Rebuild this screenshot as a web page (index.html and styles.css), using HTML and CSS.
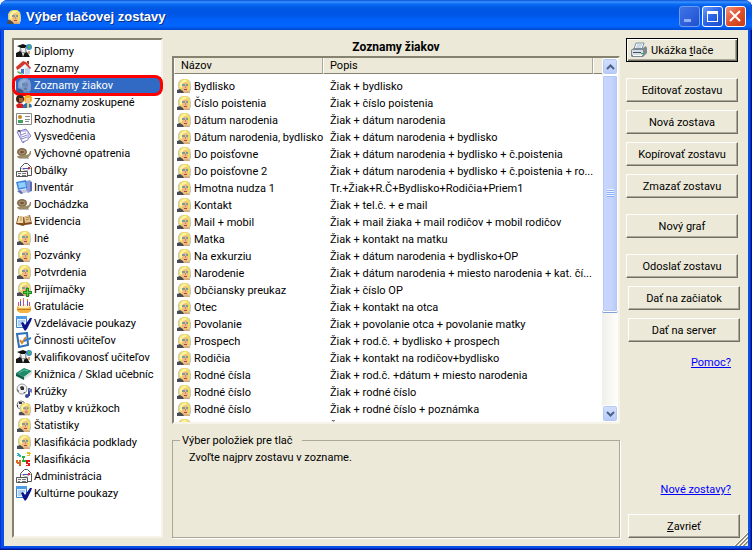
FILE: index.html
```html
<!DOCTYPE html>
<html lang="sk">

<head>
    <meta charset="UTF-8">
    <meta name="viewport" content="width=device-width, initial-scale=1.0">
    <title>Výber tlačovej zostavy</title>
    <link rel="stylesheet" href="styles.css">
</head>

<body>
    <!-- Icon set -->
    <svg class="sprite" aria-hidden="true">
        <symbol id="face" viewBox="0 0 16 16">
            <path d="M2 5l2-3 3-1h4l3 2 1 4v5l-2 3H6L2 10z" fill="#c4c6c8" />
            <path d="M3 5l2-3 3-1h3l2 2 1 3v5l-2 3H7L3 10z" fill="#f2dc5c" />
            <path d="M4 5l3-3 3 0 1 1-4 3-1 4-2-1z" fill="#fff3a0" />
            <path d="M7 5l3-1 2 2v5l-2 3H8l-2-3z" fill="#efb988" />
            <path d="M6 6h3v2H6zM10 6h2v2h-2z" fill="#7f9c94" />
            <path d="M9 8h1v2H9z" fill="#c98f64" />
            <path d="M8 11h3v1H8z" fill="#b4473c" />
            <path d="M1 12l3-1 3 2 1 2H1z" fill="#4b4b55" />
            <path d="M8 14l3-1 3 1v1H8z" fill="#d9a878" />
        </symbol>
        <symbol id="graduate" viewBox="0 0 16 16">
            <path d="M1 3l6-2 5 2-5 3z" fill="#111" />
            <path d="M4 5h6l1 5H3z" fill="#999" />
            <path d="M5 5h4v4H6z" fill="#eee" />
            <path d="M0 10l4-2 3 3 4-2 3 5H0z" fill="#151515" />
            <path d="M6 10l2 1-1 3z" fill="#fff" />
            <circle cx="13" cy="4" r="3" fill="#3a8fd0" />
            <path d="M12 2l3 1-1 3-2-1z" fill="#4fb060" />
            <path d="M12 8h2v3h-2z" fill="#c9a070" />
        </symbol>
        <symbol id="house" viewBox="0 0 16 16">
            <path d="M3 7l6-4 5 4v7l-5 1-6-3z" fill="#eef2fa" />
            <path d="M9 8l5-1v7l-5 1z" fill="#c4d4ee" />
            <path d="M0 7l7-6 3 1 5 6-1 1-5-5-6 5-2 1z" fill="#d3382a" />
            <path d="M11 1h2v4l-2-2z" fill="#a02c22" />
            <path d="M5 9h3v5l-3-1z" fill="#3f78c4" />
            <path d="M1 11l3 1 3 3-5-2z" fill="#58a848" />
        </symbol>
        <symbol id="people" viewBox="0 0 16 16">
            <circle cx="4" cy="5" r="4" fill="#3a2418" />
            <circle cx="12" cy="5" r="4" fill="#f2b020" />
            <path d="M3 4h4v4H3z" fill="#a85c30" />
            <path d="M10 4h4v5h-4z" fill="#f3c48a" />
            <path d="M0 11l3-2 4 1v4H1z" fill="#d6201c" />
            <path d="M7 11l3-2 5 1 1 3-4 1H7z" fill="#2872c0" />
            <path d="M11 9h2v5h-2z" fill="#f7d060" />
        </symbol>
        <symbol id="card" viewBox="0 0 16 16">
            <path d="M0.500 2.500h15v11h-15z" fill="#fff" stroke="#888" />
            <circle cx="4" cy="6" r="2" fill="#c8842e" />
            <path d="M2 9h5v3H2z" fill="#3fa060" />
            <path d="M9 5h5v1H9zM9 8h5v1H9zM9 10h4v1H9z" fill="#888" />
        </symbol>
        <symbol id="sheets" viewBox="0 0 16 16">
            <path d="M1 4l9-3 5 7-8 7z" fill="#e7e5fb" stroke="#7d78c0" />
            <path d="M4 3l8 0 0 9-6 2z" fill="#fff" stroke="#9c98d8" />
            <path d="M5 7l5-2M6 9l5-2M6 11l5-2" stroke="#8a86cc" />
            <path d="M1 2l3 0 1 3z" fill="#555" />
        </symbol>
        <symbol id="snail" viewBox="0 0 16 16">
            <ellipse cx="6" cy="7" rx="5" ry="4" fill="#7c6a4c" />
            <ellipse cx="6" cy="7" rx="3" ry="2" fill="none" stroke="#b89c74" />
            <path d="M5 6h2v2H5z" fill="#8a4a3a" />
            <path d="M1 11l9-1 3-1 1-3h1v3l-3 4H2z" fill="#9c8c64" />
            <path d="M3 13h10v1H3z" fill="#bbb" />
        </symbol>
        <symbol id="envelope" viewBox="0 0 16 16">
            <path d="M4.500 13.500v-8l4-4h3l4 4v8z" fill="#fff" stroke="#555" />
            <path d="M5 6l5 3 5-3" fill="none" stroke="#aaa" />
            <path d="M7 6h5v1H7z" fill="#5050c0" />
            <path d="M12 5h2v2h-2z" fill="#d03030" />
            <path d="M0.500 9.500h11v5H0.500z" fill="#f4f4f4" stroke="#555" />
            <path d="M2 11h3v1H2zM6 11h4v1H6zM2 13h2v1H2zM6 13h4v1H6z" fill="#777" />
        </symbol>
        <symbol id="computer" viewBox="0 0 16 16">
            <path d="M10 2l4-1 2 2v9l-4 2-2-2z" fill="#8a9cd8" />
            <path d="M14 3h2v9h-2z" fill="#5c6cb0" />
            <path d="M0 3l10-2 1 8-9 2z" fill="#3f86e0" />
            <path d="M2 4l7-1 1 5-7 1z" fill="#8fd0fa" />
            <path d="M3 11l6-1 3 3-7 2z" fill="#c4c8e4" />
            <path d="M1 12l3-1 3 3-2 1z" fill="#5a6ea8" />
        </symbol>
        <symbol id="book" viewBox="0 0 16 16">
            <path d="M0 11l2-8 6 1 6-2 2 9-7 1-2 1z" fill="#7d4a22" />
            <path d="M1 10l2-7 4 1 1 6-3 0z" fill="#f1d9a8" />
            <path d="M8 4l5-2 2 7-6 1z" fill="#e4c48c" />
            <path d="M7 4h1v7H7z" fill="#93602c" />
            <path d="M4 5l2 0M4 7l2 0M10 5l3-1M10 7l3-1" stroke="#b88c50" />
        </symbol>
        <symbol id="faceplus" viewBox="0 0 16 16">
            <use href="#face" />
            <path d="M10 7h3v3h3v3h-3v3h-3v-3H7v-3h3z" fill="#1e8a22" />
            <path d="M11 8h1v7h-1zM8 11h7v1H8z" fill="#58cc50" />
        </symbol>
        <symbol id="cake" viewBox="0 0 16 16">
            <path d="M1 8l3-2h8l3 2v5l-3 2H4l-3-2z" fill="#f0b840" />
            <path d="M1 8l3-2h8l3 2-3 2H4z" fill="#fff2c0" />
            <path d="M1 11h14v1H1z" fill="#c87828" />
            <path d="M4 3h1v5H4zM11 3h1v5h-1z" fill="#3868d0" />
            <path d="M7 2h1v6H7zM2 4h1v4H2zM13 4h1v4h-1z" fill="#d048a8" />
            <path d="M4 1h1v2H4zM7 0h1v2H7zM11 1h1v2h-1z" fill="#f08020" />
        </symbol>
        <symbol id="formcheck" viewBox="0 0 16 16">
            <path d="M0.500 1.500h10v11h-10z" fill="#e8f2ff" stroke="#3d86cc" />
            <path d="M0 1h11v3H0z" fill="#4d9ce4" />
            <path d="M2 6h7M2 8h5M2 10h3" stroke="#7aaee0" />
            <path d="M5 8l2-1 2 3 5-7h2l-1 3-4 8-2 2-2-3z" fill="#0b1488" />
        </symbol>
        <symbol id="clipcheck" viewBox="0 0 16 16">
            <path d="M1 2l10-1 1 12-9 2z" fill="#fff" stroke="#2f6fb4" stroke-width="2" />
            <path d="M4 8l2 3 4-6" fill="none" stroke="#d8862c" stroke-width="2" />
            <path d="M8 9l7-3" stroke="#3b7fc8" stroke-width="2" />
        </symbol>
        <symbol id="greenbook" viewBox="0 0 16 16">
            <path d="M0 7l8-5 8 3-8 6z" fill="#1d8a68" />
            <path d="M0 7v3l8 4v-3z" fill="#0e6048" />
            <path d="M8 11l8-6v3l-8 6z" fill="#e0e0dc" />
            <path d="M3 7l5-3 4 1" fill="none" stroke="#60c0a0" />
        </symbol>
        <symbol id="ball" viewBox="0 0 16 16">
            <circle cx="6" cy="6" r="5" fill="#f2f2f4" stroke="#999" />
            <path d="M4 4l2-1 2 1 0 3-3 0zM1 6l2 2-1 1zM7 10l2-1 0 1z" fill="#333" />
            <path d="M13 5v8" stroke="#36469c" stroke-width="2" />
            <path d="M12 5l4 1v4l-3-2z" fill="#6c7cc4" />
            <circle cx="11" cy="13" r="2" fill="#36469c" />
        </symbol>
        <symbol id="ballface" viewBox="0 0 16 16">
            <circle cx="5" cy="5" r="4" fill="#eee" stroke="#888" />
            <path d="M3 2h3v2H3zM1 5h1v2H1z" fill="#333" />
            <use href="#face" x="2" y="2" width="14" height="14" />
        </symbol>
        <symbol id="numbers" viewBox="0 0 16 16">
            <path d="M1 2h2v1h1v1h1v2H3V5H1V4h1V3H1z" fill="#20b0c0" />
            <path d="M11 1h3v1h1v1h-1v2h-3V4h2V3h-2z" fill="#e0c020" />
            <path d="M6 5h3v2H8v2h2v2H6V9h1V7H6z" fill="#28b030" />
            <path d="M0 9h2v2h1V9h2v6H3v-2H1v-1H0z" fill="#d86820" />
            <path d="M10 9h4v2h-2v1h2v3h-4v-1h2v-1h-2z" fill="#e01818" />
        </symbol>
        <symbol id="printer" viewBox="0 0 16 16">
            <path d="M5 1h8l-2 6H3z" fill="#fff" stroke="#7890a8" />
            <path d="M6 3h5M5 5h5" stroke="#9ab4cc" />
            <path d="M0 8l3-2h9l3-2 1 2v5l-4 4H1l-1-1z" fill="#7c8894" />
            <path d="M1 8h11v5H1z" fill="#d5dde4" />
            <path d="M2 10h8v1H2z" fill="#45525e" />
            <path d="M2 13h9v1H2z" fill="#fff" />
            <path d="M10 11h2v1h-2z" fill="#20b030" />
        </symbol>
    </svg>

    <div class="window">
        <header class="titlebar">
            <svg class="icon"><use href="#face" /></svg>
            <h1>Výber tlačovej zostavy</h1>
            <div class="caption-buttons">
                <button class="caption-btn disabled" aria-label="Minimalizovať" disabled>
                    <svg viewBox="0 0 21 21"><path d="M5 13h7v3H5z" fill="#8fb0f4" /></svg>
                </button>
                <button class="caption-btn" aria-label="Maximalizovať">
                    <svg viewBox="0 0 21 21"><path d="M5 5h11v11H5zM6 8v7h9V8z" fill="#fff" fill-rule="evenodd" /></svg>
                </button>
                <button class="caption-btn close" aria-label="Zavrieť okno">
                    <svg viewBox="0 0 21 21"><path d="M5 5l10 10M15 5L5 15" stroke="#fff" stroke-width="2" /></svg>
                </button>
            </div>
        </header>

        <main class="content">
            <!-- Categories -->
            <ul class="categories">
                <li><button class="category"><svg class="icon"><use href="#graduate" /></svg>Diplomy</button></li>
                <li><button class="category"><svg class="icon"><use href="#house" /></svg>Zoznamy</button></li>
                <li><button class="category selected"><svg class="icon"><use href="#face" /></svg><span>Zoznamy žiakov</span></button></li>
                <li><button class="category"><svg class="icon"><use href="#people" /></svg>Zoznamy zoskupené</button></li>
                <li><button class="category"><svg class="icon"><use href="#card" /></svg>Rozhodnutia</button></li>
                <li><button class="category"><svg class="icon"><use href="#sheets" /></svg>Vysvedčenia</button></li>
                <li><button class="category"><svg class="icon"><use href="#snail" /></svg>Výchovné opatrenia</button></li>
                <li><button class="category"><svg class="icon"><use href="#envelope" /></svg>Obálky</button></li>
                <li><button class="category"><svg class="icon"><use href="#computer" /></svg>Inventár</button></li>
                <li><button class="category"><svg class="icon"><use href="#snail" /></svg>Dochádzka</button></li>
                <li><button class="category"><svg class="icon"><use href="#book" /></svg>Evidencia</button></li>
                <li><button class="category"><svg class="icon"><use href="#face" /></svg>Iné</button></li>
                <li><button class="category"><svg class="icon"><use href="#face" /></svg>Pozvánky</button></li>
                <li><button class="category"><svg class="icon"><use href="#face" /></svg>Potvrdenia</button></li>
                <li><button class="category"><svg class="icon"><use href="#faceplus" /></svg>Prijímačky</button></li>
                <li><button class="category"><svg class="icon"><use href="#cake" /></svg>Gratulácie</button></li>
                <li><button class="category"><svg class="icon"><use href="#formcheck" /></svg>Vzdelávacie poukazy</button></li>
                <li><button class="category"><svg class="icon"><use href="#clipcheck" /></svg>Činnosti učiteľov</button></li>
                <li><button class="category"><svg class="icon"><use href="#graduate" /></svg>Kvalifikovanosť učiteľov</button></li>
                <li><button class="category"><svg class="icon"><use href="#greenbook" /></svg>Knižnica / Sklad učebníc</button></li>
                <li><button class="category"><svg class="icon"><use href="#ball" /></svg>Krúžky</button></li>
                <li><button class="category"><svg class="icon"><use href="#ballface" /></svg>Platby v krúžkoch</button></li>
                <li><button class="category"><svg class="icon"><use href="#face" /></svg>Štatistiky</button></li>
                <li><button class="category"><svg class="icon"><use href="#face" /></svg>Klasifikácia podklady</button></li>
                <li><button class="category"><svg class="icon"><use href="#numbers" /></svg>Klasifikácia</button></li>
                <li><button class="category"><svg class="icon"><use href="#envelope" /></svg>Administrácia</button></li>
                <li><button class="category"><svg class="icon"><use href="#formcheck" /></svg>Kultúrne poukazy</button></li>
            </ul>

            <!-- Reports of the selected category -->
            <section class="reports">
                <h2>Zoznamy žiakov</h2>
                <div class="report-list">
                    <div class="report-rows">
                        <table>
                            <thead>
                                <tr><th class="col-name">Názov</th><th>Popis</th><th class="col-rest"></th></tr>
                            </thead>
                            <tbody>
                                <tr><td><svg class="icon"><use href="#face" /></svg>Bydlisko</td><td>Žiak + bydlisko</td></tr>
                                <tr><td><svg class="icon"><use href="#face" /></svg>Číslo poistenia</td><td>Žiak + číslo poistenia</td></tr>
                                <tr><td><svg class="icon"><use href="#face" /></svg>Dátum narodenia</td><td>Žiak + dátum narodenia</td></tr>
                                <tr><td><svg class="icon"><use href="#face" /></svg>Dátum narodenia, bydlisko</td><td>Žiak + dátum narodenia + bydlisko</td></tr>
                                <tr><td><svg class="icon"><use href="#face" /></svg>Do poisťovne</td><td>Žiak + dátum narodenia + bydlisko + č.poistenia</td></tr>
                                <tr><td><svg class="icon"><use href="#face" /></svg>Do poisťovne 2</td><td>Žiak + dátum narodenia + bydlisko + č.poistenia + ro...</td></tr>
                                <tr><td><svg class="icon"><use href="#face" /></svg>Hmotna nudza 1</td><td>Tr.+Žiak+R.Č+Bydlisko+Rodičia+Priem1</td></tr>
                                <tr><td><svg class="icon"><use href="#face" /></svg>Kontakt</td><td>Žiak + tel.č. + e mail</td></tr>
                                <tr><td><svg class="icon"><use href="#face" /></svg>Mail + mobil</td><td>Žiak + mail žiaka + mail rodičov + mobil rodičov</td></tr>
                                <tr><td><svg class="icon"><use href="#face" /></svg>Matka</td><td>Žiak + kontakt na matku</td></tr>
                                <tr><td><svg class="icon"><use href="#face" /></svg>Na exkurziu</td><td>Žiak + dátum narodenia + bydlisko+OP</td></tr>
                                <tr><td><svg class="icon"><use href="#face" /></svg>Narodenie</td><td>Žiak + dátum narodenia + miesto narodenia + kat. čí...</td></tr>
                                <tr><td><svg class="icon"><use href="#face" /></svg>Občiansky preukaz</td><td>Žiak + číslo OP</td></tr>
                                <tr><td><svg class="icon"><use href="#face" /></svg>Otec</td><td>Žiak + kontakt na otca</td></tr>
                                <tr><td><svg class="icon"><use href="#face" /></svg>Povolanie</td><td>Žiak + povolanie otca + povolanie matky</td></tr>
                                <tr><td><svg class="icon"><use href="#face" /></svg>Prospech</td><td>Žiak + rod.č. + bydlisko + prospech</td></tr>
                                <tr><td><svg class="icon"><use href="#face" /></svg>Rodičia</td><td>Žiak + kontakt na rodičov+bydlisko</td></tr>
                                <tr><td><svg class="icon"><use href="#face" /></svg>Rodné čísla</td><td>Žiak + rod.č. +dátum + miesto narodenia</td></tr>
                                <tr><td><svg class="icon"><use href="#face" /></svg>Rodné číslo</td><td>Žiak + rodné číslo</td></tr>
                                <tr><td><svg class="icon"><use href="#face" /></svg>Rodné číslo</td><td>Žiak + rodné číslo + poznámka</td></tr>
                                <tr><td><svg class="icon"><use href="#face" /></svg>Rodné číslo, bydlisko</td><td>Žiak + rodné číslo + bydlisko</td></tr>
                            </tbody>
                        </table>
                    </div>
                    <div class="scrollbar">
                        <button class="scroll-btn" aria-label="Hore"><svg viewBox="0 0 9 6"><path d="M1 5l3.500-3.500L8 5" /></svg></button>
                        <div class="thumb"><span class="grip"></span></div>
                        <button class="scroll-btn" aria-label="Dole"><svg viewBox="0 0 9 6"><path d="M1 1l3.500 3.500L8 1" /></svg></button>
                    </div>
                </div>
                <fieldset class="print-items">
                    <legend>Výber položiek pre tlač</legend>
                    <p>Zvoľte najprv zostavu v zozname.</p>
                </fieldset>
            </section>

            <!-- Actions -->
            <aside class="actions">
                <button class="btn default"><svg class="icon"><use href="#printer" /></svg><span>Ukážka <u>t</u>lače</span></button>
                <div class="btn-group">
                    <button class="btn">Editovať zostavu</button>
                    <button class="btn">Nová zostava</button>
                    <button class="btn">Kopírovať zostavu</button>
                    <button class="btn">Zmazať zostavu</button>
                </div>
                <button class="btn">Nový graf</button>
                <div class="btn-group">
                    <button class="btn">Odoslať zostavu</button>
                    <button class="btn right">Dať na začiatok</button>
                    <button class="btn right">Dať na server</button>
                </div>
                <a href="#" class="link">Pomoc?</a>
                <a href="#" class="link bottom">Nové zostavy?</a>
                <button class="btn right"><span><u>Z</u>avrieť</span></button>
            </aside>

            <svg class="resize-grip" viewBox="0 0 14 14">
                <path d="M0 14L14 0M4 14L14 4M8 14l6-6" stroke="#fff" />
                <path d="M1 14L14 1M5 14l9-9M9 14l5-5" stroke="#8f8c7c" />
                <path d="M2 14L14 2M6 14l8-8M10 14l4-4" stroke="#8f8c7c" />
            </svg>
        </main>
    </div>
</body>

</html>
```
FILE: styles.css
```css
* {
    margin: 0;
    padding: 0;
    box-sizing: border-box;
}

body {
    background-color: #f4f6fb;
    color: #000;
    font-family: Roboto, 'Liberation Sans', Arial, sans-serif;
    font-size: 11px;
    line-height: 17px;
}

button {
    font: inherit;
    color: inherit;
    border: none;
    background: none;
}

.sprite {
    display: none;
}

.icon {
    width: 16px;
    height: 16px;
    flex: none;
}

.window {
    display: flex;
    flex-direction: column;
    height: 100vh;
    padding: 0 4px 4px;
    background-color: #0a4fe8;
    border-radius: 8px 8px 0 0;
    box-shadow: inset -1px -1px 0 #00138c, inset -2px -2px 0 #0030c8, inset 1px 0 0 #0831d9;
    overflow: hidden;
}

/* Title bar */
.titlebar {
    display: flex;
    align-items: center;
    flex: none;
    height: 30px;
    margin: 0 -4px;
    padding: 3px 6px 0;
    background: linear-gradient(#0a50d8 0, #3a93ff 2px, #0a6cf4 4px, #0058e4 8px, #0055e5 14px, #0061fa 20px, #0266ff 26px, #0048d0 30px);
}

.titlebar h1 {
    margin-left: 4px;
    color: #fff;
    font-family: 'Liberation Sans', Arial, sans-serif;
    font-size: 13px;
    font-weight: bold;
    text-shadow: 1px 1px 0 #0a2f88;
}

.caption-buttons {
    display: flex;
    gap: 2px;
    margin-left: auto;
}

.caption-btn {
    width: 21px;
    height: 21px;
    border: 1px solid #fff;
    border-radius: 3px;
    background: linear-gradient(135deg, #6b9bf8, #2a62e6 50%, #1c4cd0);
}

.caption-btn svg {
    display: block;
    width: 21px;
    height: 21px;
    margin: -1px;
}

.caption-btn.disabled {
    border-color: #6f9cf0;
    background: linear-gradient(135deg, #3f74e8, #1f50cf);
}

.caption-btn.close {
    background: linear-gradient(135deg, #f0967c, #e0502c 50%, #c83c14);
}

/* Window body */
.content {
    position: relative;
    display: grid;
    grid-template-columns: 151px 1fr 114px;
    grid-template-rows: minmax(0, 1fr);
    flex: 1;
    min-height: 0;
    padding: 8px;
    background-color: #ece9d8;
}

.categories {
    padding: 3px 0;
    background-color: #fff;
    border: 2px solid;
    border-color: #85826f #f6f4ea #f6f4ea #85826f;
    list-style: none;
}

.category {
    position: relative;
    display: flex;
    gap: 2px;
    width: 100%;
    height: 17px;
    padding-left: 2px;
    text-align: left;
    white-space: nowrap;
}

.category.selected {
    gap: 0;
    color: #fff;
}

.category.selected span {
    flex: 1;
    padding-left: 2px;
    background-color: #316ac5;
}

.category.selected use {
    filter: grayscale(1);
    opacity: 0.5;
}

.category.selected .icon {
    height: 17px;
    background-color: #316ac5;
}

.category.selected::after {
    content: "";
    position: absolute;
    inset: -2px -2px;
    border: 3px solid #f00;
    border-radius: 8px;
}

.reports {
    display: flex;
    flex-direction: column;
    min-width: 0;
    margin: 0 6px 0 9px;
}

.reports h2 {
    height: 18px;
    font-size: 12px;
    font-weight: bold;
    line-height: 18px;
    text-align: center;
}

.report-list {
    display: flex;
    flex: 1;
    min-height: 0;
    background-color: #fff;
    border: 2px solid;
    border-color: #85826f #f6f4ea #f6f4ea #85826f;
}

.report-rows {
    flex: 1;
    min-width: 0;
    overflow: hidden;
}

.report-rows table {
    width: 100%;
    border-collapse: separate;
    border-spacing: 0;
    table-layout: fixed;
}

.report-rows th {
    height: 16px;
    padding: 0 6px;
    background-color: #ece9d8;
    border-right: 1px solid #aca899;
    border-bottom: 1px solid #85826f;
    border-left: 1px solid #fff;
    font-weight: normal;
    line-height: 15px;
    text-align: left;
}

.report-rows .col-name {
    width: 149px;
}

.report-rows .col-rest {
    width: 9px;
    padding: 0;
    border-right: none;
}

.report-rows tbody::before {
    content: "";
    display: block;
    height: 4px;
}

.report-rows td {
    height: 17px;
    padding-left: 7px;
    white-space: nowrap;
}

.report-rows td:first-child {
    padding-left: 2px;
}

.report-rows td .icon {
    margin-right: 2px;
    vertical-align: top;
}

/* Scrollbar */
.scrollbar {
    display: flex;
    flex-direction: column;
    flex: none;
    width: 16px;
    background: linear-gradient(90deg, #f0efea, #fefefb);
}

.scroll-btn {
    flex: none;
    height: 17px;
    border: 1px solid #fff;
    border-radius: 3px;
    background: linear-gradient(#d4e0fe, #b6cbf8);
    box-shadow: inset 0 0 0 1px #b4c8f4;
}

.scroll-btn svg {
    display: block;
    width: 9px;
    height: 6px;
    margin: 0 auto;
    fill: none;
    stroke: #4d6185;
    stroke-width: 2;
}

.thumb {
    display: flex;
    align-items: center;
    justify-content: center;
    height: 65%;
    margin-bottom: auto;
    border: 1px solid #fff;
    border-radius: 2px;
    background: linear-gradient(90deg, #c8d6fd, #c6d4fe 60%, #b4c8f8);
    box-shadow: inset 0 0 0 1px #b4c8f4, 0 1px 0 #7fa0d8;
}

.grip {
    width: 7px;
    height: 8px;
    background: repeating-linear-gradient(#eef4fe 0, #eef4fe 1px, #8cb0f8 1px, #8cb0f8 2px);
}

.print-items {
    flex: none;
    height: 106px;
    margin-top: 8px;
    padding: 0 16px;
    border: 1px solid #aca899;
    box-shadow: 1px 1px 0 #fff;
}

.print-items legend {
    margin-left: -9px;
    padding: 0 9px 0 2px;
    background-color: #ece9d8;
}

/* Buttons on the right */
.actions {
    display: flex;
    flex-direction: column;
    align-items: flex-start;
    gap: 16px;
}

.btn-group {
    display: flex;
    flex-direction: column;
    gap: 8px;
    width: 100%;
}

.btn {
    display: flex;
    align-items: center;
    justify-content: center;
    gap: 4px;
    width: 112px;
    height: 24px;
    background-color: #ece9d8;
    border: 1px solid;
    border-color: #fff #716f64 #716f64 #fff;
    box-shadow: inset -1px -1px 0 #aca899;
}

.btn.default {
    justify-content: flex-start;
    padding-left: 4px;
    border-color: #000;
    box-shadow: inset 1px 1px 0 #fff, inset -1px -1px 0 #716f64, inset -2px -2px 0 #aca899;
}

.btn.right {
    align-self: flex-end;
}

.link {
    align-self: flex-end;
    margin: -4px 9px 0 0;
    color: #00f;
}

.link.bottom {
    margin-top: auto;
}

.resize-grip {
    position: absolute;
    right: 0;
    bottom: 0;
    width: 14px;
    height: 14px;
}
```
